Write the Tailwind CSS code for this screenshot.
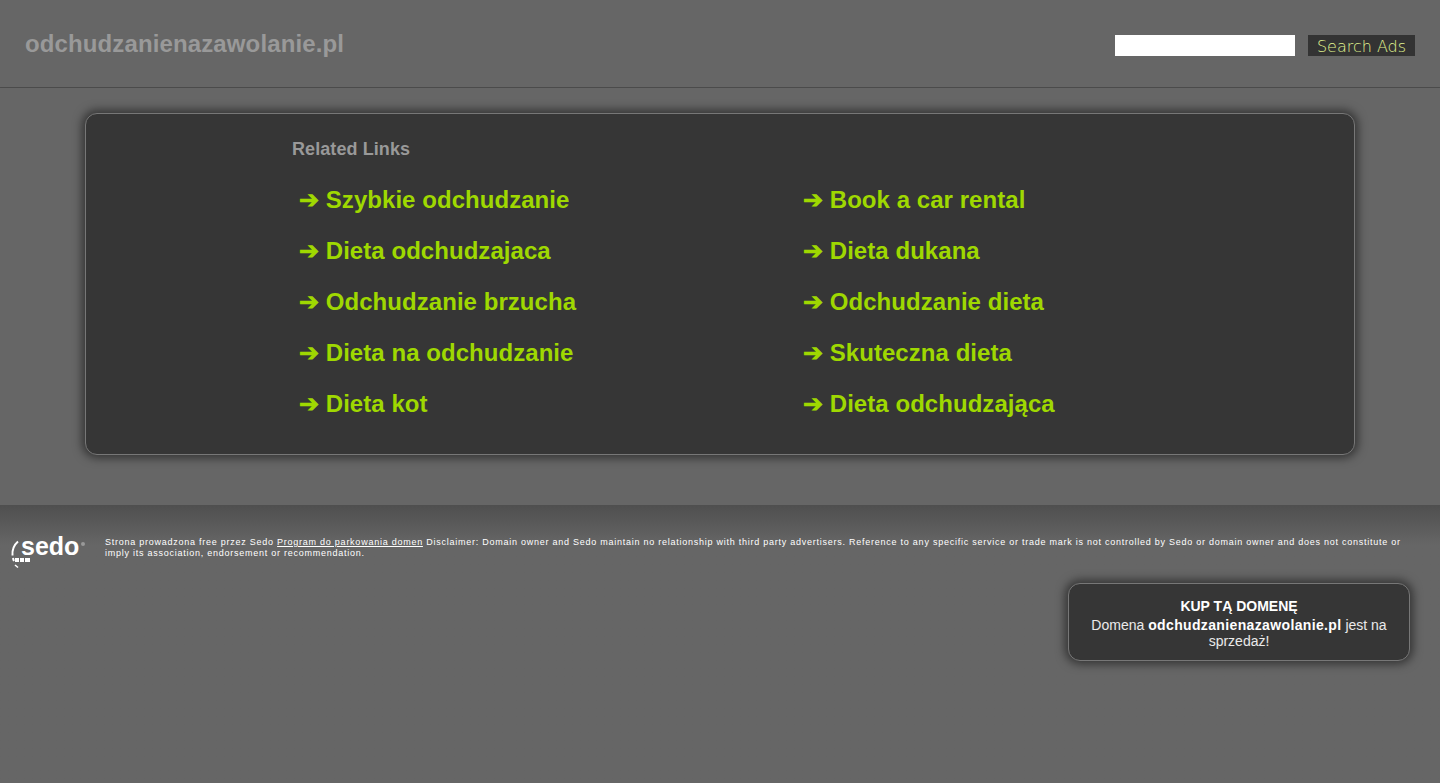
<!DOCTYPE html>
<html lang="pl">
  <head>
    <meta charset="UTF-8" />
    <title>odchudzanienazawolanie.pl</title>
    <script src="https://cdn.jsdelivr.net/npm/@tailwindcss/browser@4"></script>
    <meta name="viewport" content="width=device-width, initial-scale=1.0" />
  </head>
  <body class="bg-[#666666] min-h-screen font-['Liberation_Sans',Arial,sans-serif] text-white overflow-hidden">
    <!-- Naglowek -->
    <div class="h-[88px] border-b border-[#4d4d4d] flex items-start justify-between px-[25px]">
      <h1 class="mt-[29px] text-[24px] leading-[30px] font-bold text-[#999999] tracking-[0.12px]">odchudzanienazawolanie.pl</h1>
      <form class="mt-[35px] flex gap-[13px]">
        <input type="text" class="w-[180px] h-[21px] bg-white" />
        <button type="button" class="w-[107px] h-[21px] bg-[#333333] text-[#e0f590] text-[16px] leading-[21px] pt-[1px] font-['DejaVu_Sans',sans-serif] font-extralight">Search Ads</button>
      </form>
    </div>

    <!-- Linki -->
    <div class="h-[417px] pt-[25px] shadow-[0_1px_2px_rgba(0,0,0,0.25)] relative">
      <div class="mx-[85px] h-[342px] rounded-[12px] border border-[#777777] bg-[#363636] shadow-[0_0_10px_3px_rgba(0,0,0,0.5)] pl-[206px] pt-[24px]">
        <h2 class="text-[18px] leading-[22px] font-bold text-[#999999] tracking-[0.08px]">Related Links</h2>
        <div class="grid grid-cols-[504px_1fr] mt-[14px] text-[24px] leading-[51px] font-bold text-[#9fd801] tracking-[0.05px]">
          <a class="pl-[7px] whitespace-pre">➔ Szybkie odchudzanie</a>
          <a class="pl-[7px] whitespace-pre">➔ Book a car rental</a>
          <a class="pl-[7px] whitespace-pre">➔ Dieta odchudzajaca</a>
          <a class="pl-[7px] whitespace-pre">➔ Dieta dukana</a>
          <a class="pl-[7px] whitespace-pre">➔ Odchudzanie brzucha</a>
          <a class="pl-[7px] whitespace-pre">➔ Odchudzanie dieta</a>
          <a class="pl-[7px] whitespace-pre">➔ Dieta na odchudzanie</a>
          <a class="pl-[7px] whitespace-pre">➔ Skuteczna dieta</a>
          <a class="pl-[7px] whitespace-pre">➔ Dieta kot</a>
          <a class="pl-[7px] whitespace-pre">➔ Dieta odchudzająca</a>
        </div>
      </div>
    </div>

    <!-- Stopka -->
    <div class="bg-gradient-to-b from-[#4f4f4f] to-[#666666] to-[40px] h-[278px] relative">
      <div class="flex pt-[31px]">
        <div class="w-[105px] shrink-0 relative h-[34px]">
          <!-- logo sedo -->
          <svg width="14" height="30" viewBox="0 0 14 30" class="absolute left-[10px] top-[4px]" fill="none">
            <path d="M8 1.500 C4 5 2 10 2.500 15.500" stroke="#ffffff" stroke-width="2" />
            <path d="M3 18 C3.300 19.500 3.500 20 4 21" stroke="#ffffff" stroke-width="2" />
            <path d="M5 25 L8 27.500" stroke="#ffffff" stroke-width="1.500" />
          </svg>
          <span class="absolute left-[21px] top-[-7px] text-[25px] leading-[34px] font-bold">sedo</span>
          <span class="absolute left-[81px] top-[6px] w-[4px] h-[4px] rounded-full bg-[#999999]"></span>
          <div class="absolute left-[15px] top-[22px] flex gap-[1px]">
            <span class="w-[4px] h-[4px] bg-white"></span>
            <span class="w-[4px] h-[4px] bg-white"></span>
            <span class="w-[5px] h-[4px] bg-white"></span>
          </div>
        </div>
        <p class="w-[1310px] pt-[1px] text-[9px] leading-[11px] tracking-[0.75px] text-white">Strona prowadzona free przez Sedo <a class="underline">Program do parkowania domen</a> Disclaimer: Domain owner and Sedo maintain no relationship with third party advertisers. Reference to any specific service or trade mark is not controlled by Sedo or domain owner and does not constitute or imply its association, endorsement or recommendation.</p>
      </div>
      <div class="absolute left-[1068px] top-[78px] w-[342px] h-[78px] rounded-[12px] border border-[#777777] bg-[#363636] shadow-[0_0_10px_3px_rgba(0,0,0,0.5)] text-center pt-[14px] px-[14px]">
        <h3 class="text-[14px] leading-[17px] font-bold">KUP TĄ DOMENĘ</h3>
        <p class="mt-[2px] text-[14px] leading-[16px] text-white/90">Domena <span class="font-bold text-white tracking-[0.36px]">odchudzanienazawolanie.pl</span> jest na sprzedaż!</p>
      </div>
    </div>
  </body>
</html>
